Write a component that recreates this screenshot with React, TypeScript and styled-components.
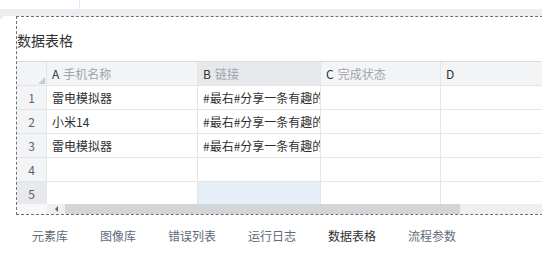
import React from "react";
import styled, { createGlobalStyle } from "styled-components";

const Global = createGlobalStyle`
  html, body { margin: 0; padding: 0; background: #ffffff; overflow: hidden; }
  body { font-family: "Noto Sans CJK SC", "Noto Sans", sans-serif; }
`;

const Page = styled.div`
  width: 542px;
  height: 253px;
  overflow: hidden;
  display: flex;
  flex-direction: column;
  background: #ebedf0;
`;

const TopStrip = styled.div`
  height: 9px;
  background: #ffffff;
  display: flex;
`;

const TopDivider = styled.div`
  width: 79px;
  border-right: 1px solid #e6e8eb;
`;

const GrayBand = styled.div`
  height: 7px;
  background: #ebedf0;
`;

const Panel = styled.div`
  flex: 1;
  background: #ffffff;
  border-top-left-radius: 6px;
  padding-left: 16px;
  display: flex;
  flex-direction: column;
`;

const Frame = styled.div`
  width: 560px;
  border: 1px dashed #6b6f76;
  display: flex;
  flex-direction: column;
`;

const Title = styled.div`
  font-size: 14px;
  line-height: 20px;
  color: #303133;
  margin: 13px 0 11px;
`;

const Grid = styled.div`
  height: 142px;
  overflow: hidden;
  border-top: 1px solid #d9dce0;
  display: grid;
  grid-template-columns: 30px 151px 123px 120px 136px;
  grid-auto-rows: 24px;
  font-size: 12px;
`;

const Cell = styled.div<{ $bg?: string }>`
  box-sizing: border-box;
  border-right: 1px solid #e3e5e8;
  border-bottom: 1px solid #e3e5e8;
  background: ${(p) => p.$bg || "#ffffff"};
  padding: 0 5px;
  line-height: 23px;
  white-space: nowrap;
  overflow: hidden;
  color: #303133;
`;

const HeadCell = styled(Cell)`
  color: #303133;
`;

const HeadName = styled.span`
  color: #a0a4aa;
  margin-left: 4px;
`;

const RowNum = styled(Cell)`
  padding: 0;
  text-align: center;
  color: #5b6270;
`;

const Corner = styled(Cell)`
  position: relative;
  padding: 0;
  background: #f3f4f6;
`;

const CornerMark = styled.div`
  position: absolute;
  right: 1px;
  bottom: 1px;
  width: 0;
  height: 0;
  border-left: 7px solid transparent;
  border-bottom: 7px solid #c8cbd0;
`;

const ScrollRow = styled.div`
  height: 10px;
  display: flex;
`;

const ScrollSpacer = styled.div`
  width: 30px;
  background: #f8f8f9;
`;

const ScrollArrow = styled.div`
  width: 18px;
  background: #efefef;
  display: flex;
  align-items: center;
  justify-content: center;
`;

const ArrowGlyph = styled.div`
  width: 0;
  height: 0;
  border-top: 3px solid transparent;
  border-bottom: 3px solid transparent;
  border-right: 3px solid #606266;
`;

const Thumb = styled.div`
  width: 395px;
  background: #d3d6d9;
`;

const Track = styled.div`
  flex: 1;
  background: #efefef;
`;

const Tabs = styled.div`
  display: flex;
  margin-top: 12px;
`;

const Tab = styled.div<{ $active?: boolean }>`
  padding: 0 16px;
  font-size: 12px;
  line-height: 18px;
  color: ${(p) => (p.$active ? "#303133" : "#5f6b7a")};
`;

const headers = [
  { letter: "A", name: "手机名称" },
  { letter: "B", name: "链接" },
  { letter: "C", name: "完成状态" },
  { letter: "D", name: "" },
];

const rows: string[][] = [
  ["雷电模拟器", "#最右#分享一条有趣的内容，快来看看吧", "", ""],
  ["小米14", "#最右#分享一条有趣的内容，快来看看吧", "", ""],
  ["雷电模拟器", "#最右#分享一条有趣的内容，快来看看吧", "", ""],
  ["", "", "", ""],
  ["", "", "", ""],
];

const tabs = ["元素库", "图像库", "错误列表", "运行日志", "数据表格", "流程参数"];

export default function App() {
  return (
    <>
      <Global />
      <Page>
        <TopStrip>
          <TopDivider />
        </TopStrip>
        <GrayBand />
        <Panel>
          <Frame>
            <Title>数据表格</Title>
            <Grid>
              <Corner>
                <CornerMark />
              </Corner>
              {headers.map((h, i) => (
                <HeadCell key={h.letter} $bg={i === 1 ? "#e6e8eb" : "#f3f4f6"}>
                  {h.letter}
                  {h.name && <HeadName>{h.name}</HeadName>}
                </HeadCell>
              ))}
              {rows.map((r, ri) => (
                <React.Fragment key={ri}>
                  <RowNum $bg={ri === 4 ? "#e8e9ec" : "#f3f4f6"}>{ri + 1}</RowNum>
                  {r.map((c, ci) => (
                    <Cell key={ci} $bg={ri === 4 && ci === 1 ? "#e6eef8" : undefined}>
                      {c}
                    </Cell>
                  ))}
                </React.Fragment>
              ))}
            </Grid>
            <ScrollRow>
              <ScrollSpacer />
              <ScrollArrow>
                <ArrowGlyph />
              </ScrollArrow>
              <Thumb />
              <Track />
            </ScrollRow>
          </Frame>
          <Tabs>
            {tabs.map((t) => (
              <Tab key={t} $active={t === "数据表格"}>
                {t}
              </Tab>
            ))}
          </Tabs>
        </Panel>
      </Page>
    </>
  );
}
